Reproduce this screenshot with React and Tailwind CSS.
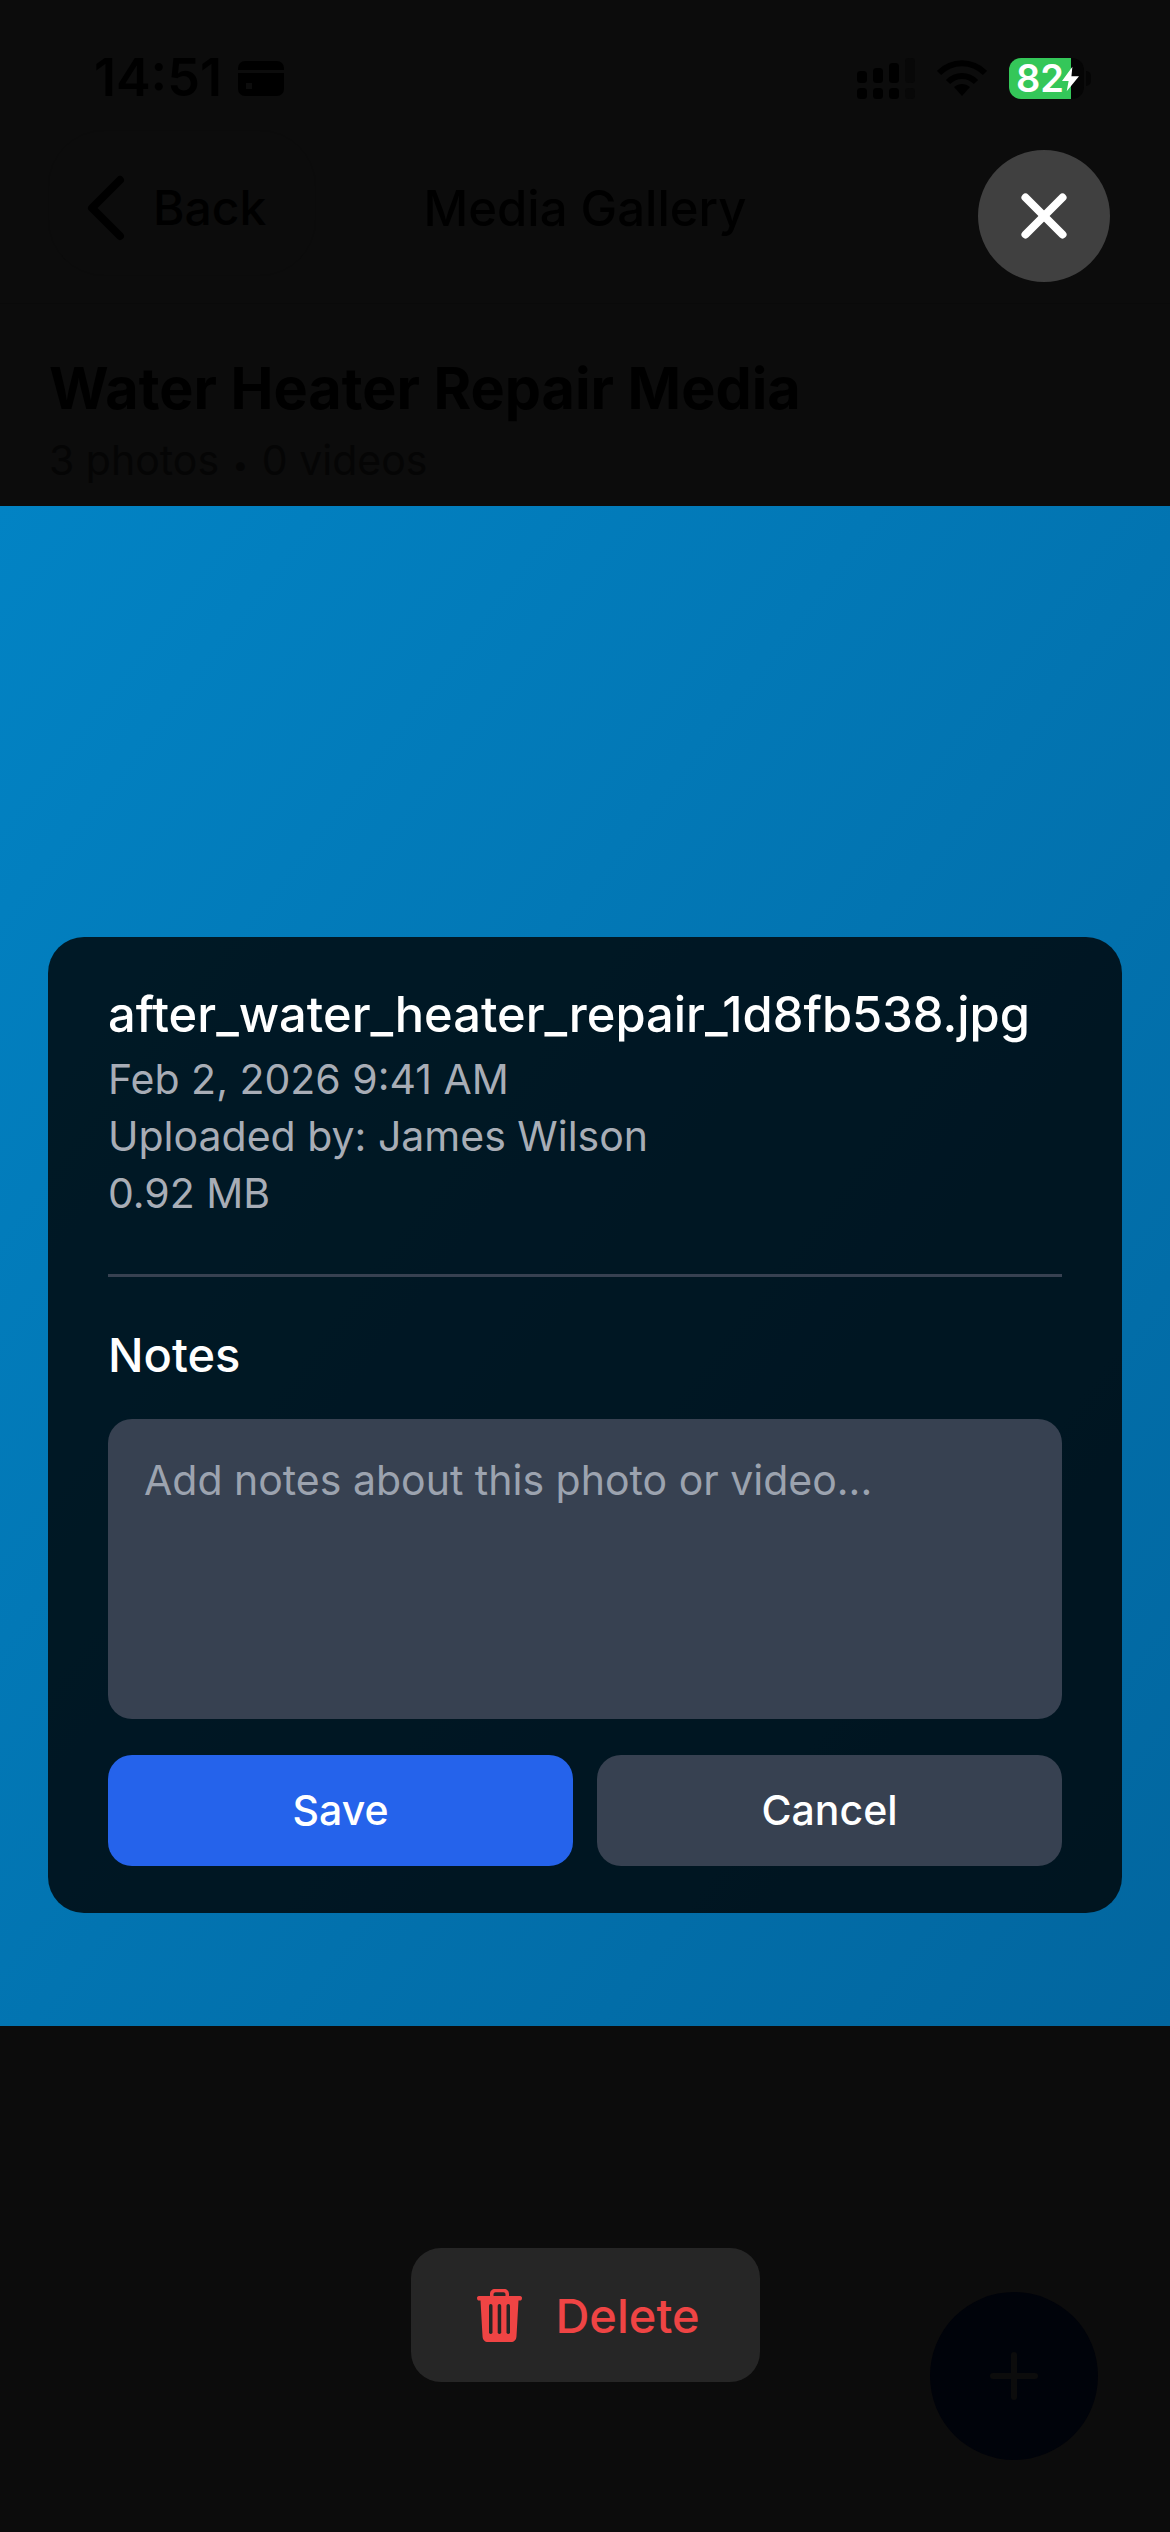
import React from 'react';
import { Plus, X } from 'lucide-react';

const SignalIcon = () => (
    <svg width="58" height="41" viewBox="0 0 58 41" fill="#000">
        <rect x="0" y="13" width="10" height="12" rx="3.5" />
        <rect x="16" y="10" width="10" height="15" rx="3.5" />
        <rect x="32" y="5" width="10" height="20" rx="3.5" />
        <rect x="48" y="0" width="10" height="25" rx="3.5" fill="#080808" />
        <rect x="0" y="30" width="10" height="11" rx="3.5" />
        <rect x="16" y="30" width="10" height="11" rx="3.5" />
        <rect x="32" y="30" width="10" height="11" rx="3.5" />
        <rect x="48" y="30" width="10" height="11" rx="3.5" fill="#080808" />
    </svg>
);

const WifiIcon = () => (
    <svg width="50" height="38" viewBox="0 0 50 38" fill="none" stroke="#000" strokeWidth="6">
        <path d="M2 14 C15 1 35 1 48 14" />
        <path d="M11 23 C19 15 31 15 39 23" />
        <path d="M17 28 L25 37 L33 28 C28 24 22 24 17 28 Z" fill="#000" stroke="none" />
    </svg>
);

const TrashIcon = () => (
    <svg width="45" height="53" viewBox="0 0 45 53" fill="#ef4444">
        <path fillRule="evenodd" d="M13 7 V5 C13 2 15 0 18 0 H27 C30 0 32 2 32 5 V7 H43 C44.500 7 45 8 45 9 C45 11 44 11.500 43 11.500 H41.500 L39.500 47 C39.300 51 37 53 34 53 H11 C8 53 5.700 51 5.500 47 L3.500 11.500 H2 C1 11.500 0 11 0 9 C0 8 .5 7 2 7 Z M16.500 7 H28.500 V5.500 C28.500 4 27.500 3.300 26.500 3.300 H18.500 C17.500 3.300 16.500 4 16.500 5.500 Z" />
        <g fill="#262626">
            <rect x="12" y="15" width="3.500" height="30" rx="1.700" />
            <rect x="20.700" y="15" width="3.500" height="30" rx="1.700" />
            <rect x="29.500" y="15" width="3.500" height="30" rx="1.700" />
        </g>
    </svg>
);

const App = () => {
    return (
        <div className="relative h-[2532px] w-[1170px] overflow-hidden bg-[#0c0c0c] [font-family:Inter,sans-serif]">
            {/* Status bar */}
            <div className="flex h-[156px] items-center justify-between pl-[94px] pr-[86px]">
                <div className="flex items-center gap-[16px]">
                    <span className="text-[52px] font-semibold leading-none text-black">14:51</span>
                    <div className="relative h-[35px] w-[46px] rounded-[7px] bg-black">
                        <div className="absolute left-0 right-0 top-[9px] h-[3px] bg-[#0c0c0c]" />
                        <div className="absolute bottom-[7px] left-[8px] h-[6px] w-[6px] bg-[#0c0c0c]" />
                    </div>
                </div>
                <div className="flex items-center gap-[22px]">
                    <SignalIcon />
                    <WifiIcon />
                    <div className="relative flex h-[41px] w-[75px] items-center rounded-[12px] bg-[#050505]">
                        <div className="flex h-full w-[62px] items-center rounded-l-[12px] bg-[#34c759] pl-[7px] text-[38px] font-semibold leading-none text-white">82</div>
                        <svg className="absolute left-[53px] top-[8px]" width="17" height="26" viewBox="0 0 18 26" fill="#fff">
                            <path d="M11 0 L0 15 H7 L5 26 L18 10 H10 Z" />
                        </svg>
                        <div className="absolute left-[77px] top-[13px] h-[15px] w-[5px] rounded-r-full bg-[#050505]" />
                    </div>
                </div>
            </div>

            {/* Nav */}
            <div className="relative flex h-[148px] items-center border-b border-[#0a0a0a] pb-[44px]">
                <div className="relative flex items-center pl-[50px]">
                    <div className="absolute left-[48px] top-[-22px] h-[146px] w-[268px] rounded-[56px] border border-[#0b0b0b]" />
                    <svg width="112" height="112" viewBox="0 0 24 24" fill="none" stroke="#000" strokeWidth="1.7" strokeLinecap="round" strokeLinejoin="round">
                        <path d="M15 18l-6-6 6-6" />
                    </svg>
                    <span className="ml-[-9px] text-[48px] font-medium leading-none text-black">Back</span>
                </div>
                <span className="absolute left-0 right-0 top-[28px] text-center text-[49px] font-medium leading-none text-black">Media Gallery</span>
            </div>

            {/* Title */}
            <div className="h-[202px] px-[49px] pt-[48px]">
                <h1 className="text-[57.5px] font-bold leading-[72px] text-black">Water Heater Repair Media</h1>
                <p className="mt-[9px] text-[41px] leading-[54px] text-[#050505]">3 photos <span className="mx-[2px] text-[28px]">•</span> 0 videos</p>
            </div>

            {/* Photo */}
            <div className="flex h-[1520px] flex-col justify-end bg-gradient-to-br from-[#0283c4] to-[#02669f] px-[48px] pb-[113px]">
                <div className="h-[976px] rounded-[36px] bg-black/80 px-[60px] pt-[48px]">
                    <div className="text-[48.8px] font-medium leading-[60px] text-white">after_water_heater_repair_1d8fb538.jpg</div>
                    <div className="mt-[6px] text-[41px] leading-[57px] text-[#a8adb6]">
                        <div>Feb 2, 2026 9:41 AM</div>
                        <div>Uploaded by: James Wilson</div>
                        <div>0.92 MB</div>
                    </div>
                    <div className="mt-[52px] h-[3px] bg-[#374151]" />
                    <div className="mt-[48px] text-[47px] font-medium leading-[60px] text-white">Notes</div>
                    <textarea
                        readOnly
                        placeholder="Add notes about this photo or video..."
                        className="mt-[34px] block h-[300px] w-full resize-none rounded-[24px] bg-[#374151] px-[36px] pt-[36px] text-[41px] leading-[51px] text-white outline-none placeholder:text-[#9ca3af]"
                    />
                    <div className="mt-[36px] flex gap-[24px]">
                        <button className="h-[111px] flex-1 rounded-[24px] bg-[#2563eb] text-[41px] font-medium text-white">Save</button>
                        <button className="h-[111px] flex-1 rounded-[24px] bg-[#374151] text-[41px] font-medium text-white">Cancel</button>
                    </div>
                </div>
            </div>

            {/* Delete */}
            <div className="flex justify-center pt-[222px]">
                <button className="flex h-[134px] w-[349px] items-center justify-center gap-[33px] rounded-[30px] bg-[#262626] pl-[7px] text-[47px] font-medium leading-none text-[#ef4444]">
                    <TrashIcon />
                    Delete
                </button>
            </div>

            {/* Close */}
            <button className="absolute left-[978px] top-[150px] flex h-[132px] w-[132px] items-center justify-center rounded-full bg-[#404040] text-white">
                <X className="h-[74px] w-[74px]" strokeWidth={2.6} />
            </button>

            {/* FAB behind overlay */}
            <div className="absolute left-[930px] top-[2292px] flex h-[168px] w-[168px] items-center justify-center rounded-full bg-[#00030a] text-[#0c0c0c]">
                <Plus className="h-[72px] w-[72px]" strokeWidth={2} />
            </div>
        </div>
    );
};

export default App;
